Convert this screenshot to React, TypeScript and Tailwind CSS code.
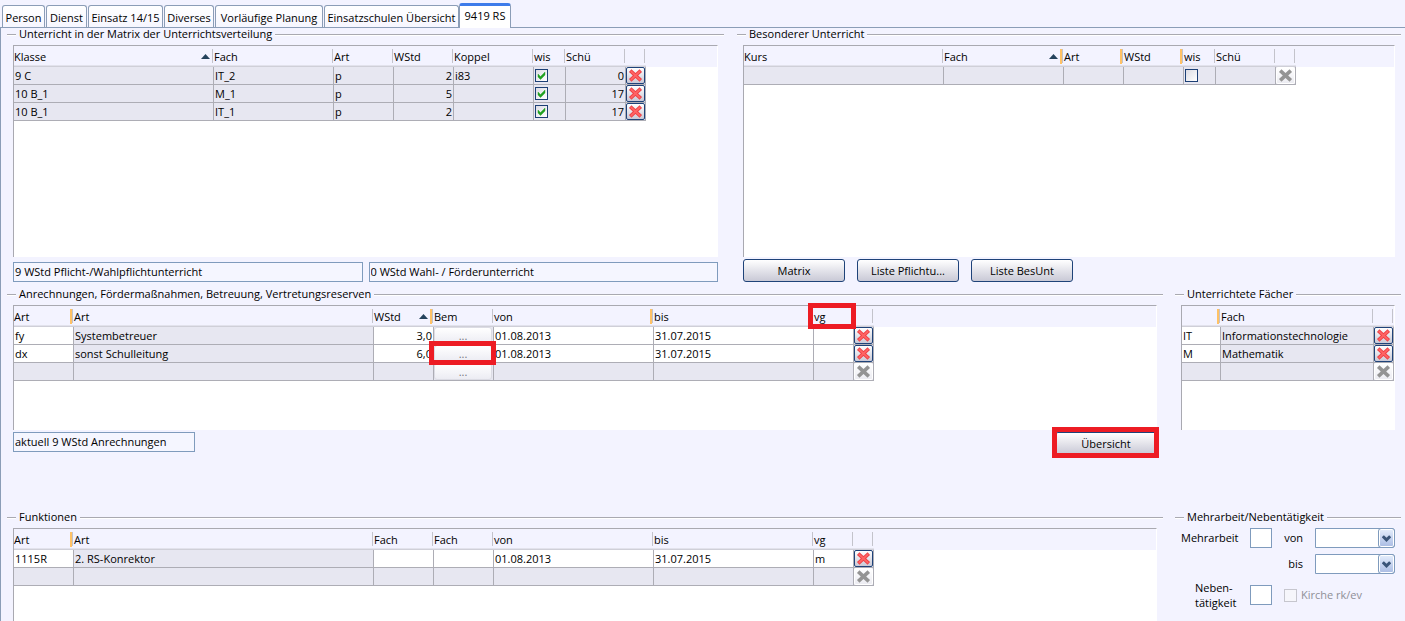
import { type ReactNode } from 'react';
import clsx from 'clsx';

interface Column {
  label: string;
  width: string;
  sorted?: boolean;
  marked?: boolean;
  highlight?: boolean;
}

interface Cell {
  text?: string;
  right?: boolean;
  white?: boolean;
  check?: boolean;
  more?: boolean;
  highlight?: boolean;
}

interface Row {
  cells: Cell[];
  empty?: boolean;
}

const tabs = [
  { label: 'Person', width: 'w-[43px]' },
  { label: 'Dienst', width: 'w-[41px]' },
  { label: 'Einsatz 14/15', width: 'w-[75px]' },
  { label: 'Diverses', width: 'w-[50px]' },
  { label: 'Vorläufige Planung', width: 'w-[108px]' },
  { label: 'Einsatzschulen Übersicht', width: 'w-[135px]' },
];

const matrixColumns: Column[] = [
  { label: 'Klasse', width: 'w-[200px]', sorted: true },
  { label: 'Fach', width: 'w-[120px]' },
  { label: 'Art', width: 'w-[60px]' },
  { label: 'WStd', width: 'w-[60px]' },
  { label: 'Koppel', width: 'w-[80px]' },
  { label: 'wis', width: 'w-[32px]' },
  { label: 'Schü', width: 'w-[60px]' },
  { label: '', width: 'w-[20px]' },
];

const matrixRow = (klasse: string, fach: string, wstd: string, koppel: string, schueler: string): Row => ({
  cells: [
    { text: klasse },
    { text: fach },
    { text: 'p' },
    { text: wstd, right: true },
    { text: koppel },
    { check: true },
    { text: schueler, right: true },
  ],
});

const matrixRows: Row[] = [
  matrixRow('9 C', 'IT_2', '2', 'i83', '0'),
  matrixRow('10 B_1', 'M_1', '5', '', '17'),
  matrixRow('10 B_1', 'IT_1', '2', '', '17'),
];

const besondererColumns: Column[] = [
  { label: 'Kurs', width: 'w-[200px]' },
  { label: 'Fach', width: 'w-[120px]', sorted: true, marked: true },
  { label: 'Art', width: 'w-[60px]', marked: true },
  { label: 'WStd', width: 'w-[60px]', marked: true },
  { label: 'wis', width: 'w-[32px]' },
  { label: 'Schü', width: 'w-[60px]' },
  { label: '', width: 'w-[20px]' },
];

const besondererRows: Row[] = [
  { empty: true, cells: [{}, {}, {}, {}, { check: false }, {}] },
];

const anrechnungColumns: Column[] = [
  { label: 'Art', width: 'w-[60px]', marked: true },
  { label: 'Art', width: 'w-[300px]' },
  { label: 'WStd', width: 'w-[60px]', sorted: true, marked: true },
  { label: 'Bem', width: 'w-[60px]' },
  { label: 'von', width: 'w-[160px]', marked: true },
  { label: 'bis', width: 'w-[160px]' },
  { label: 'vg', width: 'w-[40px]', highlight: true },
  { label: '', width: 'w-[20px]' },
];

const anrechnungRows: Row[] = [
  {
    cells: [
      { text: 'fy', white: true },
      { text: 'Systembetreuer' },
      { text: '3,0', right: true, white: true },
      { more: true },
      { text: '01.08.2013', white: true },
      { text: '31.07.2015', white: true },
      { white: true },
    ],
  },
  {
    cells: [
      { text: 'dx', white: true },
      { text: 'sonst Schulleitung' },
      { text: '6,0', right: true, white: true },
      { more: true, highlight: true },
      { text: '01.08.2013', white: true },
      { text: '31.07.2015', white: true },
      { white: true },
    ],
  },
  { empty: true, cells: [{}, {}, {}, { more: true }, {}, {}, {}] },
];

const faecherColumns: Column[] = [
  { label: '', width: 'w-[39px]', marked: true },
  { label: 'Fach', width: 'w-[153px]' },
  { label: '', width: 'w-[20px]' },
];

const faecherRows: Row[] = [
  { cells: [{ text: 'IT', white: true }, { text: 'Informationstechnologie' }] },
  { cells: [{ text: 'M', white: true }, { text: 'Mathematik' }] },
  { empty: true, cells: [{}, {}] },
];

const funktionColumns: Column[] = [
  { label: 'Art', width: 'w-[60px]', marked: true },
  { label: 'Art', width: 'w-[300px]' },
  { label: 'Fach', width: 'w-[60px]' },
  { label: 'Fach', width: 'w-[60px]' },
  { label: 'von', width: 'w-[160px]' },
  { label: 'bis', width: 'w-[160px]' },
  { label: 'vg', width: 'w-[40px]' },
  { label: '', width: 'w-[20px]' },
];

const funktionRows: Row[] = [
  {
    cells: [
      { text: '1115R', white: true },
      { text: '2. RS-Konrektor' },
      { white: true },
      { white: true },
      { text: '01.08.2013', white: true },
      { text: '31.07.2015', white: true },
      { text: 'm', white: true },
    ],
  },
  { empty: true, cells: [{}, {}, {}, {}, {}, {}, {}] },
];

function Marker({ className }: { className: string }) {
  return <span className={clsx('pointer-events-none absolute z-10 border-5 border-[#ed1c24]', className)} />;
}

function Group({ title, className, children }: { title: string; className?: string; children: ReactNode }) {
  return (
    <section className={clsx('flex min-w-0 flex-col', className)}>
      <h2 className="mb-[3px] flex h-3.5 items-center gap-[3px] whitespace-nowrap">
        <span className="h-0.5 w-[9px] border-t border-[#a9a9b1] bg-white" />
        <span className="pb-0.5">{title}</span>
        <span className="h-0.5 flex-1 border-t border-[#a9a9b1] bg-white" />
      </h2>
      <div className="flex grow flex-col px-1.5">{children}</div>
    </section>
  );
}

function DeleteButton({ disabled }: { disabled?: boolean }) {
  return (
    <button
      type="button"
      aria-label="Löschen"
      disabled={disabled}
      className={clsx(
        'flex h-[17px] w-[19px] items-center justify-center rounded-[2px] border bg-linear-to-b from-white',
        disabled ? 'border-white to-[#ececf2]' : 'border-[#1f4379] to-[#c9c9d6]'
      )}
    >
      <svg width="15" height="13" viewBox="0 0 15 13" fill="none">
        <path
          d="M2.2 1.6 12.8 11.4M12.8 1.6 2.2 11.4"
          stroke={disabled ? '#949494' : '#ee4146'}
          strokeWidth="3.6"
        />
        {!disabled && <path d="M2.8 2.2 12.2 10.8M12.2 2.2 2.8 10.8" stroke="#ff6464" strokeWidth="1.8" />}
      </svg>
    </button>
  );
}

function CheckBox({ checked, label }: { checked: boolean; label: string }) {
  return (
    <span className="relative ml-px block size-[13px]">
      <input
        type="checkbox"
        aria-label={label}
        defaultChecked={checked}
        className="peer block size-[13px] appearance-none border border-[#1c3f75] bg-linear-to-br from-[#dcdce4] to-white"
      />
      <svg
        width="13"
        height="13"
        viewBox="0 0 13 13"
        className="pointer-events-none absolute inset-0 hidden peer-checked:block"
      >
        <path d="M3 5 5.5 7.5 10 3V6L5.5 10.5 3 8Z" fill="#21a121" stroke="#21a121" strokeWidth="0.4" />
      </svg>
    </span>
  );
}

function CellContent({ cell }: { cell: Cell }) {
  if (cell.check !== undefined) {
    return <CheckBox checked={cell.check} label="wis" />;
  }
  if (cell.more) {
    return (
      <button
        type="button"
        aria-label="Bemerkung"
        className="block h-[17px] w-[58px] rounded-[3px] border border-[#dcdce4] bg-linear-to-b from-white to-[#ececf3] leading-4 text-[#77777f]"
      >
        ...
      </button>
    );
  }
  return <>{cell.text}</>;
}

function DataTable({ columns, rows, className }: { columns: Column[]; rows: Row[]; className?: string }) {
  return (
    <div
      className={clsx(
        'border-t border-r border-l border-t-[#a9a9b1] border-r-white border-l-[#a9a9b1] bg-[linear-gradient(#f3f3ff_21px,#fff_21px)]',
        className
      )}
    >
      <table className="w-0 table-fixed border-separate border-spacing-0">
        <colgroup>
          {columns.map((col, i) => (
            <col key={i} className={col.width} />
          ))}
        </colgroup>
        <thead>
          <tr>
            {columns.map((col, i) => (
              <th
                key={i}
                className="relative h-[21px] border-b border-[#cfcfd8] p-0 text-left font-normal shadow-[inset_0_-1px_0_#e2e2ec]"
              >
                <div className="flex h-[18px] items-center whitespace-nowrap">
                  <span className="min-w-0 flex-1 pt-0.5">{col.label}</span>
                  {col.sorted && (
                    <svg width="9" height="5" viewBox="0 0 9 5" className="mr-0.5">
                      <path d="M4.5 0 9 5H0Z" fill="#24425c" />
                    </svg>
                  )}
                  {col.marked && <span className="h-[15px] w-0.5 bg-[#ffc266]" />}
                  <span className="mr-px h-3.5 w-px bg-[#c3c3cb]" />
                </div>
                {col.highlight && <Marker className="-top-[3px] -right-0.5 -left-1.5 h-[26px]" />}
              </th>
            ))}
          </tr>
        </thead>
        <tbody>
          {rows.map((row, r) => (
            <tr key={r}>
              {row.cells.map((cell, c) => (
                <td
                  key={c}
                  className={clsx(
                    'relative h-[18px] border-r border-b border-[#adadb5] p-0 leading-4 whitespace-nowrap',
                    cell.white ? 'bg-white' : 'bg-[#e7e7f1]',
                    cell.right ? 'pr-px text-right' : cell.text && 'pl-px'
                  )}
                >
                  <CellContent cell={cell} />
                  {cell.highlight && <Marker className="-top-1 -right-[3px] -left-[5px] h-6" />}
                </td>
              ))}
              <td className="h-[18px] border-r border-b border-[#adadb5] bg-[#e7e7f1] p-0">
                <DeleteButton disabled={row.empty} />
              </td>
            </tr>
          ))}
        </tbody>
      </table>
    </div>
  );
}

function Status({ label, value, className }: { label: string; value: string; className?: string }) {
  return (
    <input
      readOnly
      aria-label={label}
      value={value}
      className={clsx('h-5 min-w-0 border border-[#7f9bbd] bg-[#f5f6ff] px-px pb-0.5', className)}
    />
  );
}

function PushButton({ children }: { children: ReactNode }) {
  return (
    <button
      type="button"
      className="h-[23px] w-[102px] rounded-[3px] border border-[#1f4379] bg-linear-to-b from-white to-[#c9c9d6]"
    >
      {children}
    </button>
  );
}

function DateSelect({ id }: { id: string }) {
  return (
    <span className="relative block h-5">
      <select id={id} className="block h-5 w-full appearance-none rounded-r-[3px] border border-[#7f9bbd] bg-white px-0.5">
        <option value=""></option>
      </select>
      <span className="pointer-events-none absolute top-0 right-0 flex h-5 w-[17px] items-center justify-center rounded-[3px] border border-[#7f9bbd] bg-linear-to-b from-[#e6eefc] to-[#a9bbe3] shadow-[inset_0_0_0_1px_#fff]">
        <svg width="9" height="7" viewBox="0 0 9 7" fill="none">
          <path d="M0.8 1.2 4.5 4.9 8.2 1.2" stroke="#3a5478" strokeWidth="3" />
        </svg>
      </span>
    </span>
  );
}

const boxClass = 'h-5 w-full border border-[#7f9bbd] bg-white px-0.5';

export default function App() {
  return (
    <div className="flex min-h-screen flex-col bg-[#f3f3ff] font-['Open_Sans',sans-serif] text-[11px] leading-4 text-black">
      <nav className="flex h-7 items-end gap-px border-b border-[#8b9db7] pl-0.5">
        {tabs.map((tab) => (
          <button
            key={tab.label}
            type="button"
            className={clsx(
              'h-[22px] rounded-t-[3px] border border-b-0 border-[#8b9db7] bg-linear-to-b from-white to-[#f6f6ff] pt-0.5 whitespace-nowrap',
              tab.width
            )}
          >
            {tab.label}
          </button>
        ))}
        <button
          type="button"
          className="-mb-px -ml-px h-[25px] w-[52px] rounded-t-[3px] border border-t-3 border-b-0 border-[#8b9db7] border-t-[#3d7bea] bg-white pb-0.5"
        >
          9419 RS
        </button>
      </nav>

      <main className="flex grow flex-col border-l border-[#8b9db7] pr-1 pl-1.5">
        <div className="grid grid-cols-[717fr_664fr] gap-[13px]">
          <Group title="Unterricht in der Matrix der Unterrichtsverteilung">
            <DataTable columns={matrixColumns} rows={matrixRows} className="h-[212px]" />
            <div className="mt-[5px] flex gap-1.5">
              <Status label="Pflichtunterricht" value="9 WStd Pflicht-/Wahlpflichtunterricht" className="flex-1" />
              <Status label="Wahlunterricht" value="0 WStd Wahl- / Förderunterricht" className="flex-1" />
            </div>
          </Group>
          <Group title="Besonderer Unterricht">
            <DataTable columns={besondererColumns} rows={besondererRows} className="h-[212px]" />
            <div className="mt-0.5 flex gap-3">
              <PushButton>Matrix</PushButton>
              <PushButton>Liste Pflichtu...</PushButton>
              <PushButton>Liste BesUnt</PushButton>
            </div>
          </Group>
        </div>

        <div className="mt-1.5 grid grid-cols-[1fr_226px] gap-3">
          <Group title="Anrechnungen, Fördermaßnahmen, Betreuung, Vertretungsreserven">
            <DataTable columns={anrechnungColumns} rows={anrechnungRows} className="h-[125px]" />
            <div className="mt-0.5 flex items-start justify-between">
              <Status label="Anrechnungen" value="aktuell 9 WStd Anrechnungen" className="w-[182px]" />
              <div className="relative">
                <PushButton>Übersicht</PushButton>
                <Marker className="-top-[5px] -right-0.5 -bottom-[3px] -left-[3px]" />
              </div>
            </div>
          </Group>
          <Group title="Unterrichtete Fächer">
            <DataTable columns={faecherColumns} rows={faecherRows} className="h-[125px]" />
          </Group>
        </div>

        <div className="mt-14 grid grow grid-cols-[1fr_226px] gap-3">
          <Group title="Funktionen">
            <DataTable columns={funktionColumns} rows={funktionRows} className="grow" />
          </Group>
          <Group title="Mehrarbeit/Nebentätigkeit">
            <div className="grid grid-cols-[57px_22px_19px_80px] items-center gap-x-3 gap-y-1.5">
              <label htmlFor="mehrarbeit">Mehrarbeit</label>
              <input id="mehrarbeit" className={boxClass} />
              <label htmlFor="von" className="text-right">von</label>
              <DateSelect id="von" />
              <label htmlFor="bis" className="col-start-3 text-right">bis</label>
              <DateSelect id="bis" />
              <label htmlFor="neben" className="pl-3.5 leading-[15px]">
                Neben-
                <br />
                tätigkeit
              </label>
              <input id="neben" className={boxClass} />
              <label className="col-span-2 flex items-center gap-1 whitespace-nowrap text-[#8f8f97]">
                <input
                  type="checkbox"
                  disabled
                  className="size-[13px] appearance-none border border-[#c6c6ce] bg-[#f6f6fb]"
                />
                Kirche rk/ev
              </label>
            </div>
          </Group>
        </div>
      </main>
    </div>
  );
}
